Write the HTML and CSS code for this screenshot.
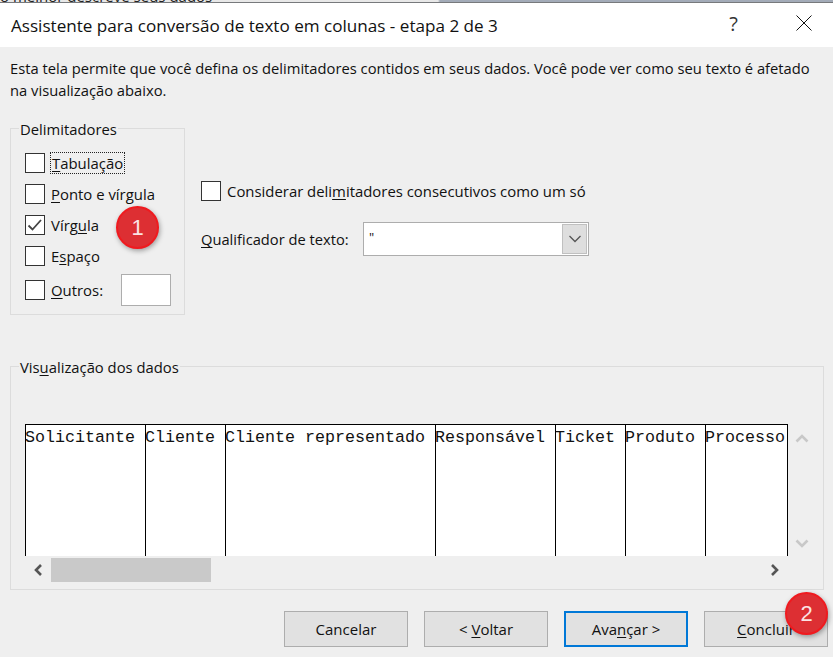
FILE: index.html
```html
<!DOCTYPE html>
<html lang="pt-BR">
<head>
<meta charset="utf-8">
<title>Assistente para conversão de texto em colunas</title>
<link rel="stylesheet" href="styles.css">
</head>
<body>
<div class="behind"><span class="behind-text">o melhor descreve seus dados</span></div>
<header class="titlebar">
  <h1 class="title">Assistente para conversão de texto em colunas - etapa 2 de 3</h1>
  <span class="help">?</span>
  <svg class="close" width="16" height="16" viewBox="0 0 16 16"><path d="M0.5 0.5L15.5 15.5M15.5 0.5L0.5 15.5" stroke="#111" stroke-width="1" fill="none"/></svg>
</header>
<main class="dialog">
  <p class="intro">Esta tela permite que você defina os delimitadores contidos em seus dados. Você pode ver como seu texto é afetado na visualização abaixo.</p>
  <section class="options">
    <fieldset class="delims">
      <legend class="legend">Delimitadores</legend>
      <div class="check-row r1"><span class="box"></span><span class="focus"><u>T</u>abulação</span></div>
      <div class="check-row r2"><span class="box"></span><span class="lbl"><u>P</u>onto e vírgula</span></div>
      <div class="check-row r3"><span class="box"><svg class="tick" width="20" height="20" viewBox="0 0 20 20"><path d="M3.5 10.5L7.5 14.5L16 5" stroke="#444" stroke-width="1.8" fill="none"/></svg></span><span class="lbl">Vírg<u>u</u>la</span></div>
      <div class="check-row r4"><span class="box"></span><span class="lbl">E<u>s</u>paço</span></div>
      <div class="check-row r5"><span class="box"></span><span class="lbl lbl-o"><u>O</u>utros:</span><span class="other"></span></div>
    </fieldset>
    <div class="right">
      <div class="consec"><span class="box"></span><span class="lbl">Considerar deli<u>m</u>itadores consecutivos como um só</span></div>
      <div class="qual">
        <span class="qual-lbl"><u>Q</u>ualificador de texto:</span>
        <div class="select"><span class="select-val">"</span><span class="select-btn"><svg width="14" height="8" viewBox="0 0 14 8"><path d="M1.5 1L7 6.5L12.5 1" stroke="#555" stroke-width="1.3" fill="none"/></svg></span></div>
      </div>
    </div>
  </section>
  <fieldset class="preview">
    <legend class="legend">Vis<u>u</u>alização dos dados</legend>
    <div class="grid-row">
      <div class="table">
        <div class="col c1">Solicitante</div>
        <div class="col c2">Cliente</div>
        <div class="col c3">Cliente representado</div>
        <div class="col c4">Responsável</div>
        <div class="col c5">Ticket</div>
        <div class="col c6">Produto</div>
        <div class="col c7">Processo</div>
      </div>
      <div class="vscroll">
        <svg width="14" height="10" viewBox="0 0 14 10"><path d="M1.5 8.5L7 3L12.5 8.5" stroke="#c8c8c8" stroke-width="2.6" fill="none"/></svg>
        <svg width="14" height="10" viewBox="0 0 14 10"><path d="M1.5 1.5L7 7L12.5 1.5" stroke="#c8c8c8" stroke-width="2.6" fill="none"/></svg>
      </div>
    </div>
    <div class="hscroll">
      <svg class="arrow-l" width="10" height="12" viewBox="0 0 10 12"><path d="M8 1L3 6L8 11" stroke="#555" stroke-width="2.6" fill="none"/></svg>
      <span class="thumb"></span>
      <svg class="arrow-r" width="10" height="12" viewBox="0 0 10 12"><path d="M2 1L7 6L2 11" stroke="#555" stroke-width="2.6" fill="none"/></svg>
    </div>
  </fieldset>
  <footer class="buttons">
    <button class="btn">Cancelar</button>
    <button class="btn">&lt; <u>V</u>oltar</button>
    <button class="btn btn-default">Ava<u>n</u>çar &gt;</button>
    <button class="btn"><u>C</u>oncluir</button>
  </footer>
</main>
<span class="badge badge-1">1</span>
<span class="badge badge-2">2</span>
</body>
</html>
```
FILE: styles.css
```css
* { box-sizing: border-box; }
html, body { margin: 0; padding: 0; }
body {
  width: 833px;
  height: 657px;
  overflow: hidden;
  position: relative;
  background: #efefef;
  color: #111;
  font-family: "Open Sans", "Noto Sans", sans-serif;
  font-size: 14.9px;
}
u { text-underline-offset: 2px; text-decoration-thickness: 1px; }

.behind {
  height: 3px;
  background: linear-gradient(to right, #e8e8e8 0, #e8e8e8 438px, #a3abb8 440px, #a3abb8 100%);
  overflow: hidden;
  border-bottom: 1px solid #77797c;
}
.behind-text { display: block; color: #222; font-size: 15px; line-height: 1; margin: -11px 0 0 0; }

.titlebar {
  height: 44px;
  background: #fff;
  display: flex;
  align-items: center;
  padding: 0 20px 0 11px;
}
.title {
  margin: 0;
  flex: 1;
  font-size: 17.1px;
  font-weight: 400;
  color: #111;
}
.help { font-size: 20px; color: #333; margin-right: 58px; margin-top: -4px; }
.close { margin-right: 1px; margin-top: -4px; }

.dialog { padding: 10px 10px 0; }
.intro {
  margin: 0;
  width: 812px;
  font-size: 14.74px;
  line-height: 22px;
  height: 44px;
}

.options { display: flex; margin-top: 17px; }
.legend { padding: 0 1px; margin-left: -6px; line-height: 20px; font-size: 14.8px; transform: translateY(1px); }

fieldset { margin: 0; min-width: 0; border: 1px solid #dcdcdc; }

.delims {
  width: 175px;
  height: 197px;
  padding: 0 0 0 14px;
}

.check-row { display: flex; align-items: center; height: 20px; margin-bottom: 11px; }
.r1 { margin-top: 15px; }
.r4 { margin-bottom: 14px; }

.box {
  flex: none;
  width: 20px;
  height: 20px;
  background: #fff;
  border: 1px solid #333;
  display: flex;
  align-items: center;
  justify-content: center;
}
.tick { flex: none; }
.lbl { margin-left: 6px; white-space: nowrap; }
.lbl-o { width: 52px; }
.focus {
  margin-left: 5px;
  padding: 0 1px;
  line-height: 20px;
  border: 1px dotted #222;
  white-space: nowrap;
}
.other {
  flex: none;
  width: 50px;
  height: 32px;
  margin-left: 18px;
  background: #fff;
  border: 1px solid #adadad;
}

.right { margin-left: 16px; padding-top: 6px; }
.consec { display: flex; align-items: center; height: 20px; margin-top: 57px; }
.qual { display: flex; align-items: center; margin-top: 21px; }
.qual-lbl { white-space: nowrap; width: 162px; font-size: 14.7px; }
.select {
  width: 226px;
  height: 34px;
  background: #fff;
  border: 1px solid #adadad;
  display: flex;
  justify-content: space-between;
}
.select-val { padding-left: 5px; font-size: 13px; line-height: 28px; }
.select-btn {
  width: 25px;
  margin: 1px;
  background: #dedede;
  border: 1px solid #c0c0c0;
  display: flex;
  align-items: center;
  justify-content: center;
}

.preview {
  width: 814px;
  height: 234px;
  margin-top: 41px;
  padding: 0 0 0 14px;
}
.grid-row { display: flex; margin-top: 48px; }
.table {
  display: flex;
  height: 132px;
  width: 763px;
  background: #fff;
  border-top: 1px solid #000;
  border-right: 1px solid #000;
}
.col {
  flex: none;
  height: 100%;
  border-left: 1px solid #000;
  font-family: "Liberation Mono", monospace;
  font-size: 16.67px;
  line-height: 25px;
  text-indent: -1px;
  white-space: nowrap;
  overflow: hidden;
  color: #111;
}
.c1 { width: 120px; }
.c2 { width: 80px; }
.c3 { width: 210px; }
.c4 { width: 120px; }
.c5 { width: 70px; }
.c6 { width: 80px; }
.c7 { width: 82px; }

.vscroll {
  width: 28px;
  padding: 9px 0 7px 7px;
  display: flex;
  flex-direction: column;
  justify-content: space-between;
  height: 132px;
}
.hscroll { display: flex; align-items: center; height: 25px; margin-top: 1px; }
.arrow-l { margin-left: 8px; flex: none; }
.thumb { width: 160px; height: 24px; background: #c9c9c9; margin-left: 8px; flex: none; }
.arrow-r { margin-left: 559px; flex: none; }

.buttons { display: flex; gap: 16px; margin-top: 21px; margin-left: 274px; }
.btn {
  flex: none;
  width: 124px;
  height: 36px;
  padding: 0;
  background: #e1e1e1;
  border: 1px solid #adadad;
  font-family: inherit;
  font-size: 15px;
  color: #111;
}
.btn-default { border: 2px solid #0078d7; }

.badge {
  position: absolute;
  width: 43px;
  height: 43px;
  border-radius: 50%;
  background: #dd2f33;
  border: 2px solid #f01a1f;
  box-shadow: 1px 2px 5px rgba(0,0,0,.35);
  color: #fbe3e3;
  font-family: "Liberation Sans", sans-serif;
  font-size: 22px;
  display: flex;
  align-items: center;
  justify-content: center;
}
.badge-1 { left: 116px; top: 206px; }
.badge-2 { left: 785px; top: 592px; }
```
